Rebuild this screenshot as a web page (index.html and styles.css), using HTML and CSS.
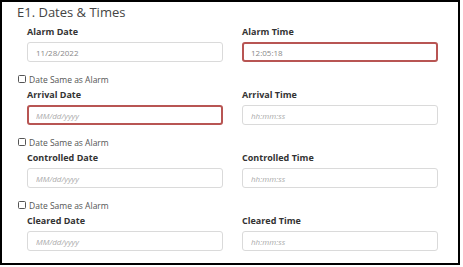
FILE: index.html
```html
<!DOCTYPE html>
<html lang="en">
  <head>
    <meta charset="UTF-8" />
    <title>E1. Dates &amp; Times</title>
    <link rel="stylesheet" href="styles.css">
  </head>

  <body>
    <div class="panel">
      <h2 class="panel-title">E1. Dates &amp; Times</h2>

      <div class="field-row">
        <div class="field">
          <label for="alarmDate">Alarm Date</label>
          <input id="alarmDate" class="text-input" type="text" value="11/28/2022" />
        </div>
        <div class="field">
          <label for="alarmTime">Alarm Time</label>
          <input id="alarmTime" class="text-input is-invalid" type="text" value="12:05:18" />
        </div>
      </div>

      <label class="same-date"><input type="checkbox" /> Date Same as Alarm</label>
      <div class="field-row">
        <div class="field">
          <label for="arrivalDate">Arrival Date</label>
          <input id="arrivalDate" class="text-input is-invalid" type="text" placeholder="MM/dd/yyyy" />
        </div>
        <div class="field">
          <label for="arrivalTime">Arrival Time</label>
          <input id="arrivalTime" class="text-input" type="text" placeholder="hh:mm:ss" />
        </div>
      </div>

      <label class="same-date"><input type="checkbox" /> Date Same as Alarm</label>
      <div class="field-row">
        <div class="field">
          <label for="controlledDate">Controlled Date</label>
          <input id="controlledDate" class="text-input" type="text" placeholder="MM/dd/yyyy" />
        </div>
        <div class="field">
          <label for="controlledTime">Controlled Time</label>
          <input id="controlledTime" class="text-input" type="text" placeholder="hh:mm:ss" />
        </div>
      </div>

      <label class="same-date"><input type="checkbox" /> Date Same as Alarm</label>
      <div class="field-row">
        <div class="field">
          <label for="clearedDate">Cleared Date</label>
          <input id="clearedDate" class="text-input" type="text" placeholder="MM/dd/yyyy" />
        </div>
        <div class="field">
          <label for="clearedTime">Cleared Time</label>
          <input id="clearedTime" class="text-input" type="text" placeholder="hh:mm:ss" />
        </div>
      </div>
    </div>
  </body>
</html>
```

FILE: styles.css
```css
* {
  box-sizing: border-box;
}

body {
  margin: 0;
  font-family: "Open Sans", sans-serif;
  background-color: #fff;
}

.panel {
  width: 460px;
  height: 265px;
  border: 2px solid #000;
  padding: 2px 0 0 15px;
}

.panel-title {
  margin: 0 0 6px;
  font-size: 13px;
  font-weight: 400;
  line-height: 16px;
  color: #444;
}

.field-row {
  display: grid;
  grid-template-columns: 196px 196px;
  column-gap: 19px;
  padding-left: 10px;
}

.field label {
  display: block;
  margin-bottom: 4px;
  font-size: 9px;
  font-weight: 700;
  line-height: 12px;
  color: #333;
}

.text-input {
  display: block;
  width: 100%;
  height: 20px;
  margin: 0;
  padding: 0 8px;
  border: 1px solid #dadada;
  border-radius: 3px;
  font-family: "Open Sans", sans-serif;
  font-size: 8px;
  color: #888;
  background-color: #fff;
  outline: none;
}

.text-input::placeholder {
  font-style: italic;
  color: #aaa;
}

.text-input.is-invalid {
  border: 2px solid #b85553;
  padding: 0 7px;
}

.same-date {
  display: flex;
  align-items: center;
  gap: 3px;
  height: 12px;
  margin: 11px 0 4px 1px;
  font-size: 8.5px;
  color: #555;
}

.same-date input {
  appearance: none;
  width: 8px;
  height: 8px;
  margin: 0;
  border: 1px solid #555;
  border-radius: 1.5px;
  background-color: #fff;
}
```
